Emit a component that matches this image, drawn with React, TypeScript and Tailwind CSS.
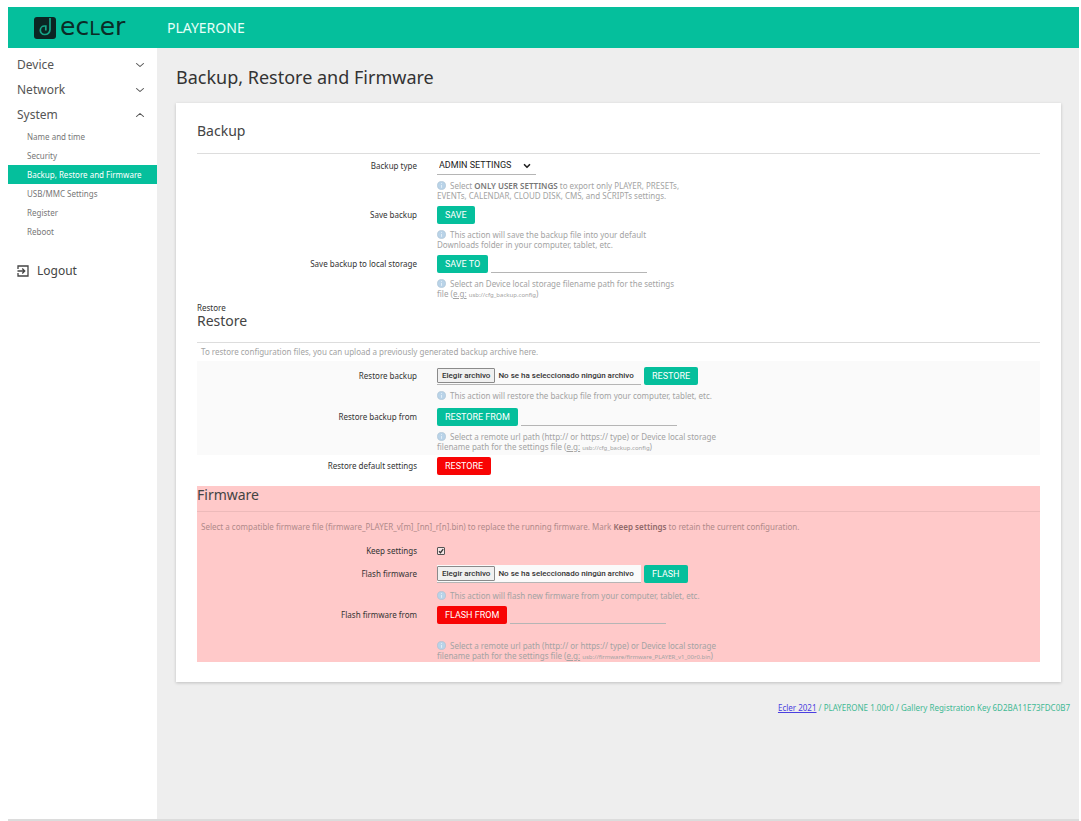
import { useState, type ReactNode } from "react";
import { ChevronDown, ChevronUp } from "lucide-react";

const subItems = [
  "Name and time",
  "Security",
  "Backup, Restore and Firmware",
  "USB/MMC Settings",
  "Register",
  "Reboot",
];

function Logo() {
  return (
    <a href="#home" aria-label="Ecler" className="flex items-center gap-1 text-[#0b2b26]">
      <svg viewBox="0 0 22 22" className="size-[22px]" aria-hidden="true">
        <rect width="22" height="22" rx="3" fill="#0b2623" />
        <path
          d="M16 1v11.500a5 5 0 0 1-5 5h-.5a4.200 4.200 0 0 1-4.200-4.300 4.200 4.200 0 0 1 4.200-4.200h1.300v4.500"
          fill="none"
          stroke="#16a588"
          strokeWidth="1.7"
        />
      </svg>
      <span className="flex items-baseline font-['DejaVu_Sans',sans-serif] text-[25px] leading-[24px]">
        ec<span className="text-[19px]">L</span>er
      </span>
    </a>
  );
}

function Hint({ children, className = "mt-1.5" }: { children: ReactNode; className?: string }) {
  return (
    <p className={`${className} text-[8px] leading-[10px] whitespace-nowrap text-[#a3a3a3]`}>
      <svg viewBox="0 0 10 10" className="mr-1 inline-block size-[9px] align-top" aria-hidden="true">
        <circle cx="5" cy="5" r="4.5" fill="#b9d3e8" stroke="#a3bccf" strokeWidth="0.6" />
        <path d="M5 4.4v3.2M5 2.4v1" stroke="#e6f0f8" strokeWidth="1" />
      </svg>
      {children}
    </p>
  );
}

function Example({ children }: { children: ReactNode }) {
  return (
    <>
      (<u>e.g:</u> <span className="text-[6px] leading-[6px]">{children}</span>)
    </>
  );
}

function Row({
  label,
  htmlFor,
  className = "",
  children,
}: {
  label: string;
  htmlFor: string;
  className?: string;
  children: ReactNode;
}) {
  return (
    <div className={`flex items-start gap-5 ${className}`}>
      <label htmlFor={htmlFor} className="w-[220px] shrink-0 text-right text-[8px] leading-[18px] text-[#333]">
        {label}
      </label>
      <div className="min-w-0 flex-1">{children}</div>
    </div>
  );
}

function Button({ id, danger, children }: { id?: string; danger?: boolean; children: ReactNode }) {
  return (
    <button
      id={id}
      type="button"
      className={`h-[18px] shrink-0 rounded-[2px] px-2 font-['Roboto',sans-serif] text-[9px] leading-[18px] whitespace-nowrap text-white ${
        danger ? "bg-[#f80404]" : "bg-[#05bf9c]"
      }`}
    >
      {children}
    </button>
  );
}

function PathInput({ label }: { label: string }) {
  return (
    <input
      type="text"
      aria-label={label}
      className="h-[18px] w-[156px] border-b border-[#b5b5b5] bg-transparent px-1 text-[8px] outline-none"
    />
  );
}

function FilePicker({ id }: { id: string }) {
  return (
    <label
      htmlFor={id}
      className="relative flex h-[18px] w-[204px] items-start gap-[3px] border-b border-[#b5b5b5] bg-[#fafafa] font-['Roboto',sans-serif] text-[8px] leading-[13px] font-medium whitespace-nowrap text-[#333]"
    >
      <input id={id} type="file" className="sr-only" />
      <span className="mt-px rounded-[1px] border border-[#8a8a8a] bg-[#f0f0f0] px-1">Elegir archivo</span>
      <span className="mt-0.5">No se ha seleccionado ningún archivo</span>
    </label>
  );
}

function Heading({ children }: { children: ReactNode }) {
  return <h2 className="text-[14px] leading-[18px] text-[#444]">{children}</h2>;
}

export default function App() {
  const [type, setType] = useState("admin");
  const [keep, setKeep] = useState(true);

  return (
    <div className="flex min-h-screen flex-col bg-white pt-[7px] pr-0.5 pl-2 font-['Noto_Sans',sans-serif]">
      <header className="flex h-[41px] items-center bg-[#05bf9c]">
        <div className="w-[159px] shrink-0 pl-[26px]">
          <Logo />
        </div>
        <span className="text-[14px] text-[#e6fff9]">PLAYERONE</span>
      </header>

      <div className="flex flex-1 border-b-2 border-[#dcdcdc]">
        <nav className="w-[149px] shrink-0 bg-white pt-1 text-[#555]">
          {["Device", "Network", "System"].map((name) => (
            <button
              key={name}
              type="button"
              className="flex h-[25px] w-full items-center justify-between pr-2.5 pl-[9px] text-[12px]"
            >
              {name}
              {name === "System" ? (
                <ChevronUp className="h-3 w-3.5" preserveAspectRatio="none" strokeWidth={2} />
              ) : (
                <ChevronDown className="h-3 w-3.5" preserveAspectRatio="none" strokeWidth={2} />
              )}
            </button>
          ))}
          <ul>
            {subItems.map((item) => (
              <li key={item}>
                <a
                  href="#section"
                  className={`block h-[19px] pl-[19px] text-[8px] leading-[19px] whitespace-nowrap ${
                    item.startsWith("Backup") ? "bg-[#05bf9c] text-white" : "text-[#777]"
                  }`}
                >
                  {item}
                </a>
              </li>
            ))}
          </ul>
          <a href="#logout" className="mt-[18px] flex h-6 items-center gap-2 pl-[9px] text-[12px] text-[#444]">
            <svg viewBox="0 0 24 24" className="size-3" fill="none" stroke="currentColor" strokeWidth="2.6" aria-hidden="true">
              <path d="M2 8V2h20v20H2v-6" />
              <path d="M1 12h14M10.500 7l5 5-5 5" />
            </svg>
            Logout
          </a>
        </nav>

        <main className="min-w-0 flex-1 bg-[#eee] pr-[18px] pl-[19px]">
          <h1 className="pt-[17px] pb-[14px] text-[18px] leading-6 text-[#333]">Backup, Restore and Firmware</h1>

          <div className="bg-white px-[21px] pt-[19px] pb-5 shadow-[0_1px_3px_rgba(0,0,0,0.2)]">
            <section>
              <div className="mb-[3px] border-b border-[#ddd] pb-[13px]">
                <Heading>Backup</Heading>
              </div>
              <Row label="Backup type" htmlFor="backup-type" className="pb-[5px]">
                <div className="relative w-[99px]">
                  <select
                    id="backup-type"
                    value={type}
                    onChange={(e) => setType(e.target.value)}
                    className="block h-[18px] w-full appearance-none border-b border-[#b5b5b5] bg-transparent pl-0.5 font-['Roboto',sans-serif] text-[9px] text-[#222] outline-none"
                  >
                    <option value="admin">ADMIN SETTINGS</option>
                    <option value="user">ONLY USER SETTINGS</option>
                  </select>
                  <ChevronDown className="pointer-events-none absolute top-1 right-1 size-2.5 text-[#222]" strokeWidth={4} />
                </div>
                <Hint>
                  Select <b className="font-semibold text-[#777]">ONLY USER SETTINGS</b> to export only PLAYER, PRESETs,
                  <br />
                  EVENTs, CALENDAR, CLOUD DISK, CMS, and SCRIPTs settings.
                </Hint>
              </Row>
              <Row label="Save backup" htmlFor="save" className="pb-[5px]">
                <div className="flex h-[18px]">
                  <Button id="save">SAVE</Button>
                </div>
                <Hint>
                  This action will save the backup file into your default
                  <br />
                  Downloads folder in your computer, tablet, etc.
                </Hint>
              </Row>
              <Row label="Save backup to local storage" htmlFor="save-to" className="pb-[5px]">
                <div className="flex h-[18px] gap-[3px]">
                  <Button id="save-to">SAVE TO</Button>
                  <PathInput label="Local storage path" />
                </div>
                <Hint>
                  Select an Device local storage filename path for the settings
                  <br />
                  file <Example>usb://cfg_backup.config</Example>
                </Hint>
              </Row>
            </section>

            <section>
              <p className="text-[8px] leading-[8px] text-[#333]">Restore</p>
              <div className="border-b border-[#ddd] pb-3">
                <Heading>Restore</Heading>
              </div>
              <p className="pl-1 text-[8px] leading-[18px] text-[#a3a3a3]">
                To restore configuration files, you can upload a previously generated backup archive here.
              </p>
              <div className="bg-[#fafafa] pt-1.5 pb-[3px]">
                <Row label="Restore backup" htmlFor="restore-file" className="pb-[7px]">
                  <div className="flex h-[18px] gap-[3px]">
                    <FilePicker id="restore-file" />
                    <Button>RESTORE</Button>
                  </div>
                  <Hint>This action will restore the backup file from your computer, tablet, etc.</Hint>
                </Row>
                <Row label="Restore backup from" htmlFor="restore-from">
                  <div className="flex h-[18px] gap-[3px]">
                    <Button id="restore-from">RESTORE FROM</Button>
                    <PathInput label="Backup path" />
                  </div>
                  <Hint>
                    Select a remote url path (http:// or https:// type) or Device local storage
                    <br />
                    filename path for the settings file <Example>usb://cfg_backup.config</Example>
                  </Hint>
                </Row>
              </div>
              <Row label="Restore default settings" htmlFor="restore-default" className="pt-0.5">
                <div className="flex h-[18px]">
                  <Button id="restore-default" danger>
                    RESTORE
                  </Button>
                </div>
              </Row>
            </section>

            <section className="mt-[11px] bg-[#ffc9c9] pb-px">
              <div className="border-b border-[#edbaba] pb-[7px]">
                <Heading>Firmware</Heading>
              </div>
              <p className="pl-1 text-[8px] leading-[30px] whitespace-nowrap text-[#b08a8a]">
                Select a compatible firmware file (firmware_PLAYER_v[m]_[nn]_r[n].bin) to replace the running firmware. Mark{" "}
                <b className="font-semibold text-[#916a6a]">Keep settings</b> to retain the current configuration.
              </p>
              <Row label="Keep settings" htmlFor="keep" className="pb-[5px]">
                <div className="relative flex h-[18px] w-2 items-center">
                  <input
                    id="keep"
                    type="checkbox"
                    checked={keep}
                    onChange={(e) => setKeep(e.target.checked)}
                    className="size-2 appearance-none rounded-[1px] border border-[#555] bg-[#f5e5e5]"
                  />
                  {keep && (
                    <svg viewBox="0 0 8 8" className="pointer-events-none absolute size-2" aria-hidden="true">
                      <path d="M2 4.200 3.500 5.700 6.200 2.200" fill="none" stroke="#333" strokeWidth="1.3" />
                    </svg>
                  )}
                </div>
              </Row>
              <Row label="Flash firmware" htmlFor="flash-file" className="pb-[5px]">
                <div className="flex h-[18px] gap-[3px]">
                  <FilePicker id="flash-file" />
                  <Button>FLASH</Button>
                </div>
                <Hint className="mt-2">This action will flash new firmware from your computer, tablet, etc.</Hint>
              </Row>
              <Row label="Flash firmware from" htmlFor="flash-from">
                <div className="flex h-[18px] gap-[3px]">
                  <Button id="flash-from" danger>
                    FLASH FROM
                  </Button>
                  <PathInput label="Firmware path" />
                </div>
                <Hint className="mt-[17px]">
                  Select a remote url path (http:// or https:// type) or Device local storage
                  <br />
                  filename path for the settings file <Example>usb://firmware/firmware_PLAYER_v1_00r0.bin</Example>
                </Hint>
              </Row>
            </section>
          </div>

          <footer className="-mr-[9px] pt-5 text-right text-[8px] leading-3 text-[#3fb994]">
            <a href="#ecler" className="text-[#4a3fe0] underline">
              Ecler 2021
            </a>{" "}
            / PLAYERONE 1.00r0 / Gallery Registration Key 6D2BA11E73FDC0B7
          </footer>
        </main>
      </div>
    </div>
  );
}
